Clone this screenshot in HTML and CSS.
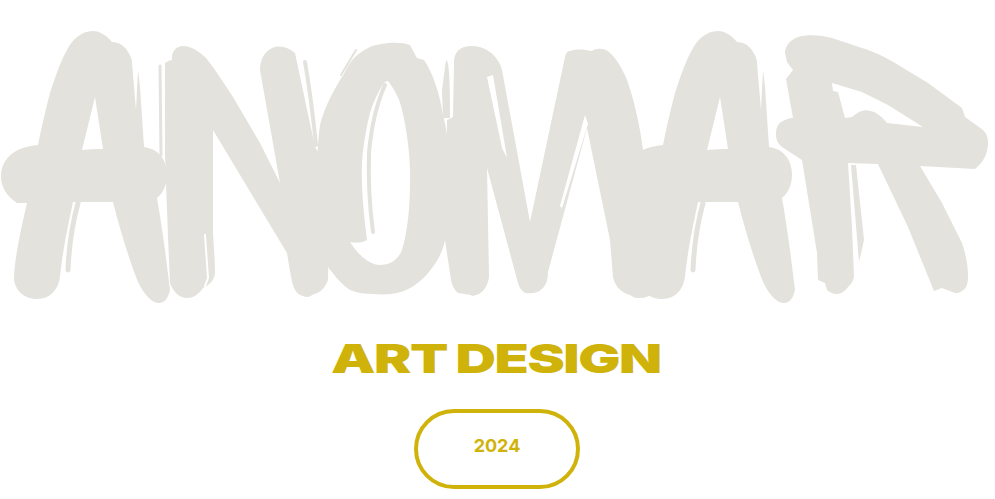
FILE: index.html
```html
<!DOCTYPE html>
<html lang="en">
<head>
<meta charset="utf-8">
<title>Anomar Art Design</title>
<link rel="stylesheet" href="styles.css">
</head>
<body>
<main class="hero">
  <svg class="logo" viewBox="0 0 995 320" role="img" aria-label="ANOMAR">
    <defs>
      <g id="brush-a">
        <path class="f" fill-rule="evenodd" d="M14 277C15 255 22 225 27 203H17C8 197 1 188 1 177C1 165 6 158 13 153C20 148 28 146 38 145C42 125 46 108 50 93C55 78 60 62 67 50C72 40 81 31 93 31C100 31 106 35 112 42C119 42 125 46 128 52C131 56 132 60 132 63L136 110L138 70L140 87L144 147C150 148 156 150 160 155C165 160 167 168 167 175C167 185 163 193 157 198C160 215 163 235 165 250L170 290C168 298 165 303 159 303C152 303 145 296 138 282C130 262 120 230 113 202H73C68 225 62 255 60 277C58 290 50 299 37 299C24 299 14 290 14 277ZM95 97L82 150C90 149 96 149 103 149Z"/>
        <path class="t w5" d="M78 203C72 225 69 245 68 270"/>
      </g>
    </defs>

    <use href="#brush-a"/>
    <path class="t w3" d="M160 66L161 155"/>

    <path class="f" d="M165 63C168 61 170 60 172 60C171 52 176 46 183 46C190 46 198 50 206 58C214 68 224 83 233 97L260 143L280 183L260 70C260 60 264 52 272 48C280 45 288 47 295 53L315 147L330 170L328 280C325 288 320 293 314 294C311 296 309 297 307 297C300 296 295 293 293 285C291 278 289 265 287 253L213 130L213 233C214 250 215 262 215 273C214 280 211 284 203 288C198 295 193 298 187 298C180 298 173 292 170 283L168 237L165 153Z"/>
    <path class="s-line" d="M205 235L208 278L205 286"/>
    <path class="t w4" d="M305 62C309 85 313 115 316 145"/>

    <path class="t w2" d="M356 50L341 75"/>
    <path class="f" fill-rule="evenodd" d="M410 45C400 41 380 43 370 47C358 53 350 60 345 72C335 88 325 105 320 125C316 150 316 215 322 250C325 262 328 268 332 272C338 280 344 286 350 290C358 293 365 294 373 294C385 295 392 294 397 293C412 290 425 278 432 268C440 258 446 245 447 225C451 180 450 140 443 115C439 90 432 72 424 60L417 58ZM388 81C395 90 400 100 402 110C407 130 411 160 410 183C410 205 408 230 402 250C398 260 390 265 380 265C370 265 358 255 350 242C355 243 362 243 367 240C364 215 361 190 362 163C363 145 367 125 370 113C374 100 380 88 385 82Z"/>
    <path class="t w4" d="M385 85C376 105 371 130 369 153C368 185 370 210 373 232"/>
    <path class="f" d="M446 60C449 60 450 80 450 118L443 118L442 90Z"/>

    <path class="f" d="M454 63C454 56 456 50 464 47C472 45 480 46 487 50C495 55 500 62 502 70L530 222L565 57C566 52 568 51 574 50C580 49 586 50 592 51C596 48 604 48 609 52C616 58 622 68 627 80C634 100 640 125 643 150L660 190L663 299C658 299 654 297 650 295C646 298 642 298 638 298C634 298 632 296 630 295C622 293 615 287 613 277L610 240L587 128L548 272C548 280 546 285 542 289C538 293 532 294 525 293C521 290 519 287 518 283L487 168L489 277C488 285 484 291 479 294L473 296C468 294 463 294 458 293C454 290 452 285 451 280L445 240L447 120L453 117Z"/>
    <path class="s" d="M487 77L493 75L507 158L502 148Z"/>
    <path class="s" d="M585 115L588 124L562 208L560 206Z"/>

    <use href="#brush-a" x="625"/>

    <path class="f" fill-rule="evenodd" d="M785 53C785 46 790 40 798 37C806 34 822 35 832 38L862 48C875 52 885 57 895 63L928 83L962 108L965 117L983 130C987 134 988 138 988 143C988 150 986 160 975 169L920 166L942 203L962 243C966 255 968 265 968 277C968 285 965 290 963 290C960 293 958 293 955 293L942 288L934 291L908 227L878 164L848 163L852 227L854 277C853 282 850 285 848 287C845 291 841 294 837 294C833 294 829 292 827 290L825 283L818 280L817 253L802 160L782 147C778 144 776 140 776 135C776 129 777 125 781 122C785 120 789 118 793 118L786 79L793 70L787 62ZM832 83L862 92L888 105L923 127L887 123C883 118 877 112 870 111C864 109 858 112 852 117L845 118L838 92L833 91Z"/>
    <path class="f" d="M851 165L856 165L864 240L859 262Z"/>
  </svg>

  <h1 class="title">ART DESIGN</h1>
  <div class="year">2024</div>
</main>
</body>
</html>
```

FILE: styles.css
```css
html, body {
  margin: 0;
  height: 100%;
  background: #fff;
  overflow: hidden;
}

.hero {
  display: flex;
  flex-direction: column;
  align-items: center;
}

.logo {
  display: block;
  width: 995px;
  height: 320px;
  flex: none;
}

.t, .s-line {
  fill: none;
  stroke-linecap: round;
  stroke-linejoin: round;
}
.t { stroke: #e3e2dc; }
.s-line { stroke: #fff; stroke-width: 2; }
.f { fill: #e3e2dc; }
.s { fill: #fff; }
.w2 { stroke-width: 2; }
.w3 { stroke-width: 3; }
.w4 { stroke-width: 4; }
.w5 { stroke-width: 5; }

.title {
  margin: 19px 4px 0 0;
  font-family: Inter, "Liberation Sans", sans-serif;
  font-weight: 900;
  font-size: 40px;
  line-height: 40px;
  letter-spacing: -1px;
  word-spacing: -1px;
  color: #d0b30a;
  transform: scaleX(1.4);
}

.year {
  box-sizing: border-box;
  margin: 30px 1px 0 0;
  width: 166px;
  height: 80px;
  padding-bottom: 8px;
  border: 4px solid #d0b30a;
  border-radius: 40px;
  display: flex;
  align-items: center;
  justify-content: center;
  font-family: Inter, "Liberation Sans", sans-serif;
  font-weight: 700;
  font-size: 18px;
  color: #d0b30a;
}
```
